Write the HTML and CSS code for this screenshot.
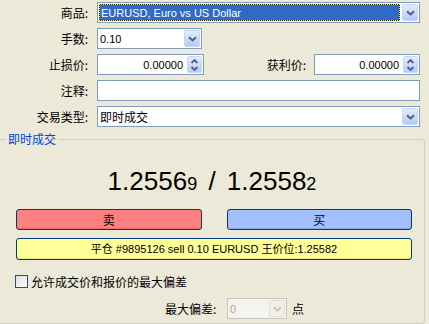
FILE: index.html
```html
<!DOCTYPE html>
<html>
<head>
<meta charset="utf-8">
<link rel="stylesheet" href="styles.css">
</head>
<body>
<div class="form">
  <div class="row">
    <span class="lbl">商品:</span>
    <div class="combo grow">
      <span class="sel">EURUSD, Euro vs US Dollar</span>
      <span class="dd"><svg width="9" height="6" viewBox="0 0 9 6"><path d="M1 1.2 L4.5 4.5 L8 1.2" fill="none" stroke="#4d6185" stroke-width="2"/></svg></span>
    </div>
  </div>
  <div class="row">
    <span class="lbl">手数:</span>
    <div class="combo lots">
      <span class="val">0.10</span>
      <span class="dd"><svg width="9" height="6" viewBox="0 0 9 6"><path d="M1 1.2 L4.5 4.5 L8 1.2" fill="none" stroke="#4d6185" stroke-width="2"/></svg></span>
    </div>
  </div>
  <div class="row">
    <span class="lbl">止损价:</span>
    <div class="spin sl">
      <span class="num">0.00000</span>
      <span class="sp"><svg width="9" height="14" viewBox="0 0 9 14"><path d="M1.5 5 L4.5 2 L7.5 5 M1.5 9 L4.5 12 L7.5 9" fill="none" stroke="#4d6185" stroke-width="1.8"/></svg></span>
    </div>
    <span class="lbl2">获利价:</span>
    <div class="spin tp">
      <span class="num">0.00000</span>
      <span class="sp"><svg width="9" height="14" viewBox="0 0 9 14"><path d="M1.5 5 L4.5 2 L7.5 5 M1.5 9 L4.5 12 L7.5 9" fill="none" stroke="#4d6185" stroke-width="1.8"/></svg></span>
    </div>
  </div>
  <div class="row">
    <span class="lbl">注释:</span>
    <div class="edit grow"></div>
  </div>
  <div class="row">
    <span class="lbl">交易类型:</span>
    <div class="combo grow">
      <span class="val cjk">即时成交</span>
      <span class="dd"><svg width="9" height="6" viewBox="0 0 9 6"><path d="M1 1.2 L4.5 4.5 L8 1.2" fill="none" stroke="#4d6185" stroke-width="2"/></svg></span>
    </div>
  </div>
</div>

<fieldset class="group">
  <legend>即时成交</legend>
  <div class="gbody">
    <div class="price">1.2556<small>9</small> / 1.2558<small>2</small></div>
    <div class="pair">
      <button class="btn sell">卖</button>
      <button class="btn buy">买</button>
    </div>
    <button class="btn close">平仓 #9895126 sell 0.10 EURUSD 王价位:1.25582</button>
    <div class="check"><span class="box"></span><span class="cjk">允许成交价和报价的最大偏差</span></div>
    <div class="dev">
      <span class="devlbl cjk">最大偏差:</span>
      <div class="combo dis">
        <span class="val">0</span>
        <span class="dd"><svg width="9" height="6" viewBox="0 0 9 6"><path d="M1 1.2 L4.5 4.5 L8 1.2" fill="none" stroke="#c9c7ba" stroke-width="2"/></svg></span>
      </div>
      <span class="pt cjk">点</span>
    </div>
  </div>
</fieldset>
</body>
</html>
```

FILE: styles.css
```css
* { box-sizing: border-box; }
html, body { margin: 0; padding: 0; height: 324px; overflow: hidden; }
body {
  width: 429px;
  background: #ece9d8;
  font-family: "Liberation Sans", "Noto Sans CJK SC", sans-serif;
  font-size: 11px;
  line-height: 14px;
  color: #000;
}
.cjk { font-family: "Noto Sans CJK SC", sans-serif; font-size: 12px; line-height: 14px; }

.form { padding: 2px 9px 0 0; }
.row { display: flex; align-items: center; height: 21px; margin-bottom: 5px; }
.row:last-child { margin-bottom: 0; }
.lbl {
  width: 88px; margin-right: 9px; text-align: right;
  font-family: "Noto Sans CJK SC", sans-serif; font-size: 12px; line-height: 14px;
}
.lbl2 {
  flex: 1; text-align: right; padding-right: 8px;
  font-family: "Noto Sans CJK SC", sans-serif; font-size: 12px; line-height: 14px;
}
.grow { flex: 1; }

.combo, .spin, .edit {
  height: 21px;
  border: 1px solid #7f9db9;
  background: #fff;
  display: flex;
  align-items: stretch;
}
.lots { width: 105px; }
.sl { width: 107px; }
.tp { width: 106px; }
.val { flex: 1; padding-left: 2px; display: flex; align-items: center; }
.sel {
  flex: 1; margin: 1px;
  background: #316ac5; color: #fff;
  border: 1px solid #1a1a1a;
  outline: 1px dotted #f2e56a; outline-offset: -1px;
  padding-left: 1px;
  display: flex; align-items: center;
}
.dd, .sp {
  width: 16px; margin: 1px;
  border: 1px solid #c6d5fb;
  border-radius: 2px;
  background: linear-gradient(#e4ecfe, #b6caf7);
  display: flex; align-items: center; justify-content: center;
}
.sp { width: 15px; }
.num { flex: 1; text-align: right; padding-right: 3px; display: flex; align-items: center; justify-content: flex-end; }

.group {
  margin: 5px 4px 0 -2px;
  padding: 0;
  border: 1px solid #d0d0bf;
  border-radius: 3px;
  min-width: 0;
  height: 192px;
}
.group legend {
  margin-left: 7px;
  padding: 0 2px;
  color: #0046d5;
  font-family: "Noto Sans CJK SC", sans-serif;
  font-size: 12px;
  line-height: 14px;
}
.gbody { padding: 0 12px 0 17px; }
.price {
  margin-top: 20px;
  height: 30px;
  text-align: center;
  padding-right: 4px;
  font-family: "Liberation Sans", sans-serif;
  font-size: 26px;
  line-height: 30px;
  word-spacing: 4px;
  white-space: nowrap;
}
.price small { font-size: 18px; line-height: 1; }

.pair { display: grid; grid-template-columns: 1fr 1fr; column-gap: 25px; margin-top: 13px; }
.btn {
  height: 21px;
  padding: 0;
  border: 1px solid #003c74;
  border-radius: 3px;
  font-family: "Noto Sans CJK SC", sans-serif;
  font-size: 12px;
  line-height: 14px;
  color: #000;
}
.sell { background: #ff8080; box-shadow: inset 0 -1px 0 #e86a6a; }
.buy { background: #a2c0fe; box-shadow: inset 0 -1px 0 #8aa8e8; }
.close {
  display: block; width: 100%; height: 22px; margin-top: 8px;
  background: #ffff99;
  box-shadow: inset 0 -1px 0 #e8e07e;
  font-family: "Liberation Sans", "Noto Sans CJK SC", sans-serif;
  font-size: 11px;
}
.check { display: flex; align-items: center; height: 13px; margin-top: 15px; margin-left: -1px; }
.box {
  width: 13px; height: 13px; margin-right: 3px;
  border: 1px solid #1c5180;
  background: linear-gradient(135deg, #dcdcd7, #fff);
}
.dev { display: flex; align-items: center; height: 21px; margin-top: 10px; padding-left: 149px; }
.devlbl { width: 62px; }
.dis { width: 60px; background: #f4f3ee; border-color: #c9c7ba; color: #aca899; }
.dis .dd { background: #f0efe9; border-color: #e0dfd6; }
.pt { margin-left: 5px; }
```
